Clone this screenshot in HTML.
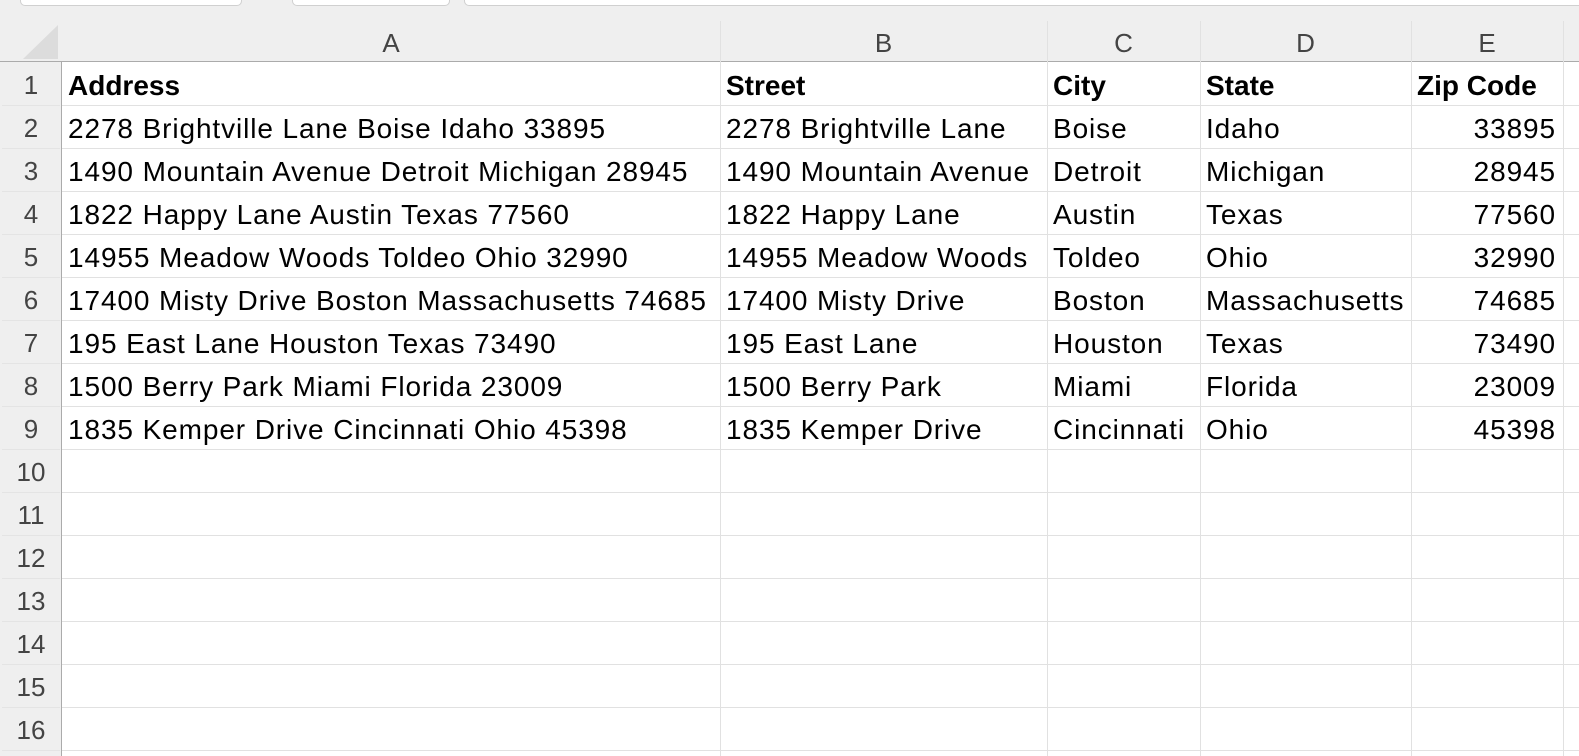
<!DOCTYPE html>
<html><head><style>
body{margin:0;width:1579px;height:756px;overflow:hidden;background:#fff;font-family:"Liberation Sans",sans-serif;position:relative}
.top{position:absolute;left:0;top:0;width:1579px;height:21px;background:#efefef}
.box{position:absolute;top:-8px;height:12px;background:#fff;border:1px solid #d0d0d0;border-radius:5px}
.colh{position:absolute;top:21px;height:41px;background:#efefef;border-bottom:1px solid #ababab;box-sizing:border-box;color:#444;font-size:26px;text-align:center;line-height:44px}
.rowh{position:absolute;left:0;width:62px;background:#efefef;border-right:1px solid #ababab;color:#444;font-size:26px;box-sizing:border-box}
.rowh div{position:absolute;left:2px;width:58px;text-align:center;height:43px;line-height:46px;border-bottom:1px solid #e4e4e4}
.vl{position:absolute;top:21px;width:1px;height:735px;background:#e1e1e1}
.hl{position:absolute;left:62px;width:1517px;height:1px;background:#e1e1e1}
.c{position:absolute;font-size:28px;line-height:46px;color:#000;white-space:nowrap;letter-spacing:0.9px}
.b{font-weight:bold;letter-spacing:0}
.r{text-align:right}
</style></head><body>
<div class="top"></div>
<div class="box" style="left:20px;width:220px"></div>
<div class="box" style="left:292px;width:156px"></div>
<div class="box" style="left:464px;width:1130px"></div>
<div class="colh" style="left:0;width:62px"><svg width="62" height="41" style="position:absolute;left:0;top:0"><polygon points="58,4 58,38 23,38" fill="#dcdcdc"/></svg></div>
<div class="colh" style="left:62px;width:658px">A</div>
<div class="colh" style="left:720px;width:327px">B</div>
<div class="colh" style="left:1047px;width:153px">C</div>
<div class="colh" style="left:1200px;width:211px">D</div>
<div class="colh" style="left:1411px;width:152px">E</div>
<div class="colh" style="left:1563px;width:16px"></div>
<div class="vl" style="left:720px"></div><div class="vl" style="left:1047px"></div><div class="vl" style="left:1200px"></div><div class="vl" style="left:1411px"></div><div class="vl" style="left:1563px"></div>
<div class="rowh" style="top:62px;height:694px">
<div style="top:0">1</div><div style="top:43px">2</div><div style="top:86px">3</div><div style="top:129px">4</div><div style="top:172px">5</div><div style="top:215px">6</div><div style="top:258px">7</div><div style="top:301px">8</div><div style="top:344px">9</div><div style="top:387px">10</div><div style="top:430px">11</div><div style="top:473px">12</div><div style="top:516px">13</div><div style="top:559px">14</div><div style="top:602px">15</div><div style="top:645px">16</div>
</div>
<div class="hl" style="top:105px"></div><div class="hl" style="top:148px"></div><div class="hl" style="top:191px"></div><div class="hl" style="top:234px"></div><div class="hl" style="top:277px"></div><div class="hl" style="top:320px"></div><div class="hl" style="top:363px"></div><div class="hl" style="top:406px"></div><div class="hl" style="top:449px"></div><div class="hl" style="top:492px"></div><div class="hl" style="top:535px"></div><div class="hl" style="top:578px"></div><div class="hl" style="top:621px"></div><div class="hl" style="top:664px"></div><div class="hl" style="top:707px"></div><div class="hl" style="top:750px"></div>

<div class="c b" style="left:68px;top:63px">Address</div>
<div class="c b" style="left:726px;top:63px">Street</div>
<div class="c b" style="left:1053px;top:63px">City</div>
<div class="c b" style="left:1206px;top:63px">State</div>
<div class="c b" style="left:1417px;top:63px">Zip Code</div>

<div class="c" style="left:68px;top:106px">2278 Brightville Lane Boise Idaho 33895</div>
<div class="c" style="left:68px;top:149px">1490 Mountain Avenue Detroit Michigan 28945</div>
<div class="c" style="left:68px;top:192px">1822 Happy Lane Austin Texas 77560</div>
<div class="c" style="left:68px;top:235px">14955 Meadow Woods Toldeo Ohio 32990</div>
<div class="c" style="left:68px;top:278px">17400 Misty Drive Boston Massachusetts 74685</div>
<div class="c" style="left:68px;top:321px">195 East Lane Houston Texas 73490</div>
<div class="c" style="left:68px;top:364px">1500 Berry Park Miami Florida 23009</div>
<div class="c" style="left:68px;top:407px">1835 Kemper Drive Cincinnati Ohio 45398</div>

<div class="c" style="left:726px;top:106px">2278 Brightville Lane</div>
<div class="c" style="left:726px;top:149px">1490 Mountain Avenue</div>
<div class="c" style="left:726px;top:192px">1822 Happy Lane</div>
<div class="c" style="left:726px;top:235px">14955 Meadow Woods</div>
<div class="c" style="left:726px;top:278px">17400 Misty Drive</div>
<div class="c" style="left:726px;top:321px">195 East Lane</div>
<div class="c" style="left:726px;top:364px">1500 Berry Park</div>
<div class="c" style="left:726px;top:407px">1835 Kemper Drive</div>

<div class="c" style="left:1053px;top:106px">Boise</div>
<div class="c" style="left:1053px;top:149px">Detroit</div>
<div class="c" style="left:1053px;top:192px">Austin</div>
<div class="c" style="left:1053px;top:235px">Toldeo</div>
<div class="c" style="left:1053px;top:278px">Boston</div>
<div class="c" style="left:1053px;top:321px">Houston</div>
<div class="c" style="left:1053px;top:364px">Miami</div>
<div class="c" style="left:1053px;top:407px">Cincinnati</div>

<div class="c" style="left:1206px;top:106px">Idaho</div>
<div class="c" style="left:1206px;top:149px">Michigan</div>
<div class="c" style="left:1206px;top:192px">Texas</div>
<div class="c" style="left:1206px;top:235px">Ohio</div>
<div class="c" style="left:1206px;top:278px">Massachusetts</div>
<div class="c" style="left:1206px;top:321px">Texas</div>
<div class="c" style="left:1206px;top:364px">Florida</div>
<div class="c" style="left:1206px;top:407px">Ohio</div>

<div class="c r" style="right:23px;top:106px">33895</div>
<div class="c r" style="right:23px;top:149px">28945</div>
<div class="c r" style="right:23px;top:192px">77560</div>
<div class="c r" style="right:23px;top:235px">32990</div>
<div class="c r" style="right:23px;top:278px">74685</div>
<div class="c r" style="right:23px;top:321px">73490</div>
<div class="c r" style="right:23px;top:364px">23009</div>
<div class="c r" style="right:23px;top:407px">45398</div>
</body></html>
